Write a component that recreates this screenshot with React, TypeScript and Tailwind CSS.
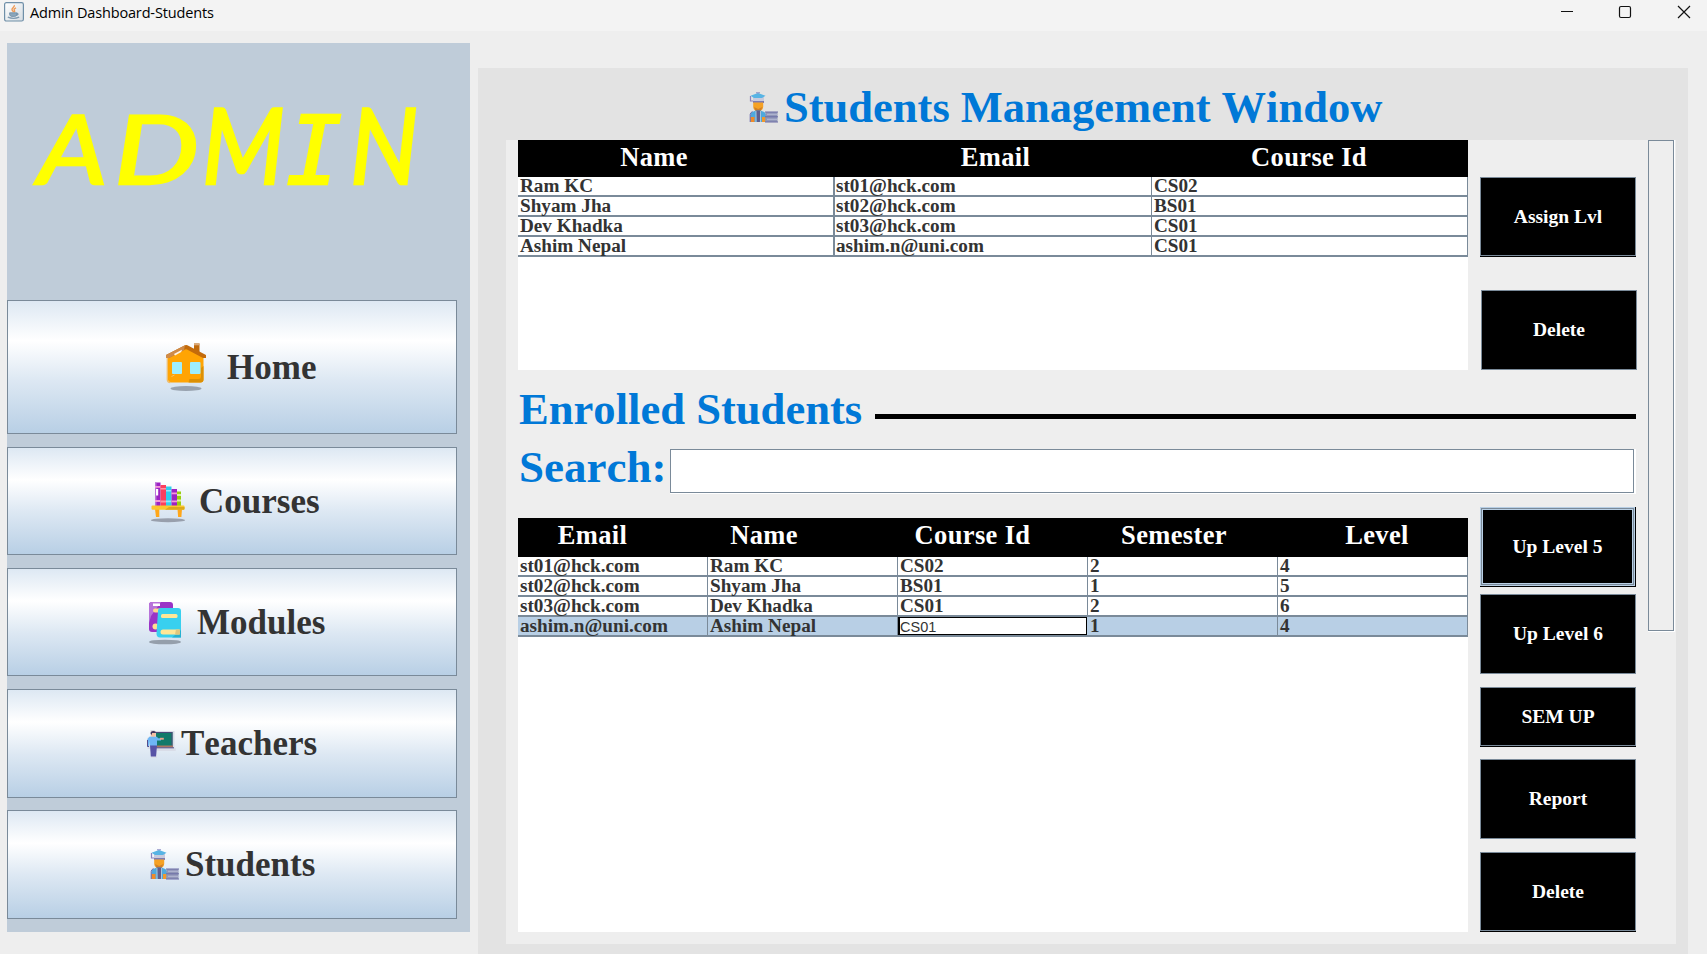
import type { ReactNode } from "react";

const serif = "font-['Liberation_Serif',serif] font-bold [font-kerning:none]";

function JavaIcon() {
  return (
    <svg width="20" height="20" viewBox="0 0 20 20" className="shrink-0">
      <defs>
        <linearGradient id="jv" x1="0" y1="0" x2="1" y2="1">
          <stop offset="0" stopColor="#ffffff" />
          <stop offset="1" stopColor="#d5dce2" />
        </linearGradient>
      </defs>
      <rect x="0.6" y="0.6" width="18.8" height="18.4" rx="1.8" fill="url(#jv)" stroke="#6f8fa8" strokeWidth="1.2" />
      <path d="M10.2 3.2c1 1.6-2.6 2.6-2.2 4.4.2 1 1.2 1.4 1.4 2.6M12 5.8c-1.6.8-2.4 1.6-1.6 2.6.5.6.4 1.2-.2 1.8" fill="none" stroke="#ef9a56" strokeWidth="1.4" />
      <path d="M5.6 10.8h7.2v1.4c0 1.4-1 2.2-2.2 2.2H8c-1.4 0-2.4-.9-2.4-2.2zM12.8 11.4c1.8-.6 2.2 1.6-.4 2" fill="#8ba6bb" stroke="#6b8aa4" strokeWidth="0.8" />
      <path d="M3.8 15.2c3 1.2 8.400 1.200 11.400 0" fill="none" stroke="#7f9ab0" strokeWidth="1.3" />
    </svg>
  );
}

function HomeIcon() {
  return (
    <svg width="42" height="50" viewBox="0 0 42 50">
      <ellipse cx="21" cy="46.500" rx="15.500" ry="2.500" fill="#98a2af" />
      <path d="M29 10V1.500h5.500V14z" fill="#c06a0c" />
      <path d="M29 1.300h5.500v2H29z" fill="#d9a878" />
      <path d="M3 14 21 4l17.500 10v23.500q0 3-3 3h-29.500q-3 0-3-3z" fill="#ffa404" />
      <path d="M38.500 24v13.500q0 3-3 3H23.500l1-3.500h9q2.500 0 2.500-2.500V26z" fill="#dc9005" />
      <path d="M2.300 15v22.500q0 3 3 3" fill="none" stroke="#f0bd6a" strokeWidth="1.300" />
      <path d="M1 13 20 3.200q1.200-.6 2.400 0L41 13v3h-3L22 7.500q-1-.5-2 0L4 16H1z" fill="#c36b0b" />
      <path d="M1 13 20 3.200l-1 5L4 16H1z" fill="#cf8b48" />
      <path d="m9 12 8-4.300-.8 2.300L10 13.500z" fill="#fff6e8" />
      <rect x="7" y="20" width="10" height="12" rx="1" fill="#9deeff" />
      <rect x="25" y="20" width="10.500" height="12" rx="1" fill="#9deeff" />
      <path d="M6.500 34.500l3-1.500" stroke="#f6c268" strokeWidth="1" />
    </svg>
  );
}

function CoursesIcon() {
  return (
    <svg width="36" height="41" viewBox="0 0 36 41">
      <ellipse cx="18" cy="38.200" rx="17" ry="2" fill="#989fac" />
      <rect x="5" y="0.500" width="5.500" height="23.500" fill="#9c22c4" />
      <rect x="5" y="0.500" width="1.500" height="23.500" fill="#bb74d8" />
      <rect x="5" y="4" width="5.500" height="1.800" fill="#f39ad8" />
      <rect x="6" y="7" width="2.200" height="6.500" fill="#fff" />
      <rect x="5" y="18" width="5.500" height="2" fill="#f39ad8" />
      <rect x="10.500" y="3" width="5.500" height="21" fill="#fb3f5e" />
      <rect x="10.500" y="6" width="5.500" height="1.500" fill="#ff93a4" />
      <rect x="10.500" y="18.500" width="5.500" height="2" fill="#ff93a4" />
      <rect x="16" y="4.500" width="5.500" height="19.500" fill="#30cdee" />
      <rect x="16" y="8" width="5.500" height="1.500" fill="#98e8f8" />
      <rect x="16" y="18.500" width="5.500" height="1.800" fill="#98e8f8" />
      <rect x="21.500" y="7" width="5.500" height="17" fill="#9c22c4" />
      <rect x="21.500" y="10.500" width="5.500" height="1.800" fill="#f39ad8" />
      <rect x="21.500" y="18.500" width="5.500" height="1.800" fill="#f39ad8" />
      <rect x="27" y="9.500" width="4" height="14.500" fill="#98cf10" />
      <rect x="27" y="12" width="4" height="2" fill="#dff0a8" />
      <rect x="27" y="17.500" width="4" height="2" fill="#dff0a8" />
      <path d="M5 27h4.300v8H6zM27.500 27H32l-.6 8h-3.300z" fill="#ffa71a" />
      <rect x="1.500" y="23.500" width="33" height="4.200" rx="1" fill="#fcc62f" />
      <path d="M19 25h15.500v1.700q0 1-1 1H15z" fill="#dda91c" />
    </svg>
  );
}

function ModulesIcon() {
  return (
    <svg width="34" height="44" viewBox="0 0 34 44">
      <ellipse cx="17" cy="41" rx="16" ry="2.300" fill="#959fab" />
      <path d="M4 1h18q3 0 3 3v24H4q-3 0-3-3V4q0-3 3-3z" fill="#9a34c6" />
      <path d="M4 1h9L3 15l-2 7V4q0-3 3-3z" fill="#b873da" />
      <rect x="5" y="2.500" width="7" height="2.500" fill="#fff" />
      <rect x="5" y="7.500" width="10" height="4" rx="2" fill="#ffd98a" />
      <path d="M1 24h9v7H4q-3 0-3-3z" fill="#9a34c6" />
      <circle cx="7.500" cy="25.500" r="3" fill="#ffdf91" />
      <path d="M13 7h17q3 0 3 3v26.500H12q-3.500 0-3.500-4L10 10q0-3 3-3z" fill="#38d0ef" />
      <path d="M24 36.500 33 29v7.500z" fill="#27b0d0" />
      <rect x="13" y="13" width="16.500" height="4" rx="1.500" fill="#ffe797" />
      <path d="M15 28.500h16.500v5H15q-2.500 0-2.500-2.500t2.500-2.500z" fill="#ffe797" />
      <path d="M28 28.500h4v5h-5z" fill="#e0c77e" />
    </svg>
  );
}

function TeachersIcon() {
  return (
    <svg width="29" height="30" viewBox="0 0 29 30">
      <path d="M8 2h19.500v17h1.200v3H10v7H4V20H.5V9l3-2V1h4z" fill="#d9dde8" />
      <rect x="9" y="3" width="16.500" height="15" fill="#127a6a" />
      <path d="M9 3h16.500v15h-1V4H9z" fill="#4b4a78" />
      <rect x="9" y="16.500" width="17" height="2" fill="#a97662" />
      <rect x="9" y="18.300" width="18" height="1" fill="#504c84" />
      <rect x="3.800" y="2" width="5" height="6" rx="2" fill="#f5bfa2" />
      <path d="M3.500 4.500q0-2.500 2.800-2.500T9 4L5 4v2z" fill="#3e3560" />
      <path d="M2.500 7.800h7.500l1 1.500h3v2.200h-4V17H3v-5l-1 5.500H.5V10z" fill="#6eb6f5" />
      <path d="M13 8.800h3.800v1.900H13z" fill="#eba489" />
      <path d="M3 16.500h7L9 27.500H3.800z" fill="#5753a6" />
      <path d="M.5 11v6.500h1.500" fill="none" stroke="#534d8c" strokeWidth="1" />
    </svg>
  );
}

function StudentsIcon() {
  return (
    <svg width="29" height="31" viewBox="0 0 29 31" className="shrink-0">
      <path d="M1.500 4v5h3" fill="none" stroke="#8b84bd" strokeWidth="1.200" />
      <path d="M4 4.500h11v6H4z" fill="#c8cadd" />
      <path d="M4 9.300h11v1.400H4z" fill="#5e599d" />
      <path d="M1.500 3.800 9 1l7.500 2.800L13 6H5z" fill="#58b4e4" />
      <path d="M7 .800h4" stroke="#7d80bf" strokeWidth="0.900" />
      <path d="M4.200 10.500h10v4q0 3-3 4.500H7.200q-3-1.500-3-4.500z" fill="#f5a124" />
      <path d="M5 15l4.200 2L13.500 15l-2 4h-5z" fill="#cf7f28" />
      <path d="M1.500 30v-7q0-2.500 3-3.500l2.500-1h4.500l2.500 1q3 1 3 3.500v7z" fill="#4fa8dc" />
      <path d="M7 18.500h4.500L10.800 30H7.700z" fill="#5f5f8d" />
      <path d="M7 19v11M11.500 19v11" stroke="#c9d9ea" strokeWidth="0.700" />
      <rect x="1.500" y="25" width="4" height="5" fill="#f08a28" />
      <rect x="13" y="25" width="3.500" height="5" fill="#f0982c" />
      <path d="M1.200 30V22.500q.2-2 2.300-3" fill="none" stroke="#5d5ca6" strokeWidth="0.900" />
      <rect x="16.500" y="20" width="12" height="10" fill="#9197b8" />
      <path d="M16 20h13M16 24.800h13M16 30h13" stroke="#6c6da6" strokeWidth="1" />
      <path d="M18 22.300h10M18 27.300h10" stroke="#b6bad4" strokeWidth="1" />
    </svg>
  );
}

function NavButton({ icon, label, size }: { icon: ReactNode; label: string; size: string }) {
  return (
    <button
      className={`flex w-[450px] shrink-0 items-center border border-[#7a8a99] bg-[linear-gradient(to_bottom,#dde8f3_0%,#ffffff_30%,#dde8f3_60%,#b8cfe5_100%)] text-[35px] leading-none text-[#333333] ${serif} ${size}`}
    >
      {icon}
      <span>{label}</span>
    </button>
  );
}

function ActionButton({ label, className = "", lip = false }: { label: string; className?: string; lip?: boolean }) {
  return (
    <button
      className={`flex w-[156px] shrink-0 flex-col bg-black text-[19.500px] leading-none text-white ${serif} ${lip ? "pb-px" : ""} ${className}`}
    >
      <span className="flex w-full flex-1 items-center justify-center border border-[#7a8a99]">{label}</span>
    </button>
  );
}

const requests = [
  ["Ram KC", "st01@hck.com", "CS02"],
  ["Shyam Jha", "st02@hck.com", "BS01"],
  ["Dev Khadka", "st03@hck.com", "CS01"],
  ["Ashim Nepal", "ashim.n@uni.com", "CS01"],
];

const enrolled = [
  ["st01@hck.com", "Ram KC", "CS02", "2", "4"],
  ["st02@hck.com", "Shyam Jha", "BS01", "1", "5"],
  ["st03@hck.com", "Dev Khadka", "CS01", "2", "6"],
  ["ashim.n@uni.com", "Ashim Nepal", "CS01", "1", "4"],
];

const row = `grid h-5 border-b-2 border-[#7a8a99] text-[19.2px] leading-[18px] text-[#333333] ${serif}`;
const head = `flex overflow-hidden bg-black text-center text-[26.500px] tracking-[0.35px] text-white ${serif}`;

export default function App() {
  return (
    <div className="flex h-[954px] w-[1707px] flex-col overflow-hidden bg-[#eeeeee]">
      <header className="flex h-[31px] shrink-0 items-start bg-[#f3f3f3] pl-1 pt-[2px]">
        <JavaIcon />
        <span className="ml-[6px] font-['Open_Sans',sans-serif] text-[14.500px] leading-[21px] tracking-[-0.15px] text-black">
          Admin Dashboard-Students
        </span>
        <div className="ml-auto mr-[16px] mt-[3px] flex gap-[45px]">
          <svg width="14" height="14" viewBox="0 0 14 14" fill="none" stroke="#111">
            <path d="M2 6.500h12" />
          </svg>
          <svg width="14" height="14" viewBox="0 0 14 14" fill="none" stroke="#111" strokeWidth="1.200">
            <rect x="1.500" y="1.500" width="11" height="11" rx="1.500" />
          </svg>
          <svg width="14" height="14" viewBox="0 0 14 14" fill="none" stroke="#111" strokeWidth="1.200">
            <path d="M1 1l12 12M13 1 1 13" />
          </svg>
        </div>
      </header>

      <div className="flex flex-1">
        <aside className="ml-[7px] mt-[12px] flex h-[889px] w-[463px] shrink-0 flex-col bg-[#bfccd9]">
          <h1 className="flex h-[257px] shrink-0 items-baseline whitespace-nowrap pl-[31px] pt-[45px] font-['Lato',sans-serif] text-[96px] italic leading-[118px] text-[#ffff00] [-webkit-text-stroke:2.5px_#ffff00]">
            <span className="w-[76px] origin-[0%_80%] scale-x-[1.14]">A</span>
            <span className="w-[88px] origin-[0%_80%] scale-x-[1.25]">D</span>
            <span className="w-[84px] origin-[0%_80%] scale-y-[1.09]">M</span>
            <span className="w-[64px] font-['DejaVu_Sans_Mono',monospace] text-[94px]">I</span>
            <span className="w-[70px] origin-[0%_80%] scale-y-[1.09]">N</span>
          </h1>
          <nav className="flex flex-col">
            <NavButton size="h-[134px] gap-[20px] pl-[157px]" icon={<HomeIcon />} label="Home" />
            <NavButton size="mt-[13px] h-[108px] gap-[13px] pl-[142px] [&>svg]:mt-[3px]" icon={<CoursesIcon />} label="Courses" />
            <NavButton size="mt-[13px] h-[108px] gap-[15px] pl-[140px] [&>svg]:mt-[2px]" icon={<ModulesIcon />} label="Modules" />
            <NavButton size="mt-[13px] h-[109px] gap-[5px] pl-[139px]" icon={<TeachersIcon />} label="Teachers" />
            <NavButton size="mt-[12px] h-[109px] gap-[6px] pl-[142px]" icon={<StudentsIcon />} label="Students" />
          </nav>
        </aside>

        <main className="ml-2 mt-[37px] flex h-[886px] w-[1210px] shrink-0 flex-col bg-[#e3e3e3]">
          <div className="flex h-[72px] shrink-0 items-start pl-[271px] pt-[16px]">
            <div className="mt-[8px]">
              <StudentsIcon />
            </div>
            <h2 className={`ml-[6px] text-[44.500px] leading-[46px] text-[#0078d7] ${serif}`}>Students Management Window</h2>
          </div>

          <section className="ml-[28px] flex h-[804px] w-[1170px] bg-[#eeeeee] pl-[12px]">
            <div className="flex w-[1118px] shrink-0 flex-col">
              <div className="flex h-[230px] shrink-0 gap-[12px]">
                <div className="w-[950px] shrink-0 bg-white">
                  <div className={`${head} h-[37px] leading-[35px]`}>
                    <span className="w-[272px] shrink-0">Name</span>
                    <span className="w-[411px] shrink-0">Email</span>
                    <span className="w-[216px] shrink-0">Course Id</span>
                  </div>
                  {requests.map((r) => (
                    <div key={r[1]} className={`${row} grid-cols-[317px_317px_316px]`}>
                      <span className="border-r-2 border-[#7a8a99] pl-[2px]">{r[0]}</span>
                      <span className="border-r border-[#7a8a99] pl-[1px]">{r[1]}</span>
                      <span className="border-r border-[#7a8a99] pl-[2px]">{r[2]}</span>
                    </div>
                  ))}
                </div>
                <div className="flex flex-col">
                  <ActionButton label="Assign Lvl" className="mt-[37px] h-[80px]" lip />
                  <ActionButton label="Delete" className="ml-px mt-[33px] h-[80px]" />
                </div>
              </div>

              <div className="flex h-[79px] shrink-0 items-center">
                <h3 className={`w-[357px] whitespace-nowrap pl-[1px] text-[44.600px] leading-none text-[#0078d7] ${serif}`}>Enrolled Students</h3>
                <div className="mt-[14px] h-[5px] flex-1 bg-black" />
              </div>

              <div className="flex h-[46px] shrink-0">
                <label className={`w-[152px] pl-px text-[45px] leading-[36px] text-[#0078d7] ${serif}`}>Search:</label>
                <div className="h-[45px] flex-1 border-b border-r-2 border-white">
                  <input className="block h-[44px] w-full border border-[#7a8a99] bg-white outline-none" />
                </div>
              </div>

              <div className="mt-[12px] flex shrink-0 gap-[12px]">
                <div className="mt-[11px] h-[414px] w-[950px] shrink-0 bg-white">
                  <div className={`${head} h-[39px] leading-[34px]`}>
                    <span className="w-[149px] shrink-0">Email</span>
                    <span className="w-[194px] shrink-0">Name</span>
                    <span className="w-[223px] shrink-0">Course Id</span>
                    <span className="w-[180px] shrink-0">Semester</span>
                    <span className="w-[226px] shrink-0">Level</span>
                  </div>
                  {enrolled.map((r, i) => (
                    <div key={r[0]} className={`${row} grid-cols-5 ${i === 3 ? "bg-[#b8cfe5]" : ""}`}>
                      {r.map((cell, c) =>
                        i === 3 && c === 2 ? (
                          <span
                            key={c}
                            className="mr-px h-[18px] overflow-hidden border border-l-2 border-black bg-white font-['Liberation_Sans',sans-serif] text-[14.500px] font-normal leading-[19px]"
                          >
                            {cell}
                          </span>
                        ) : (
                          <span key={c} className="border-r border-[#7a8a99] pl-[2px]">
                            {cell}
                          </span>
                        ),
                      )}
                    </div>
                  ))}
                </div>
                <div className="flex flex-col">
                  <button className={`h-[80px] w-[156px] bg-black pb-px pr-px text-[19.500px] leading-none text-white ${serif}`}>
                    <span className="block h-full border border-[#b8cfe5]">
                      <span className="block h-full border border-[#7a8a99]">
                        <span className="flex h-full items-center justify-center border border-[#b8cfe5]">Up Level 5</span>
                      </span>
                    </span>
                  </button>
                  <ActionButton label="Up Level 6" className="mt-[7px] h-[80px]" />
                  <ActionButton label="SEM UP" className="mt-[13px] h-[60px]" lip />
                  <ActionButton label="Report" className="mt-[12px] h-[80px]" />
                  <ActionButton label="Delete" className="mt-[13px] h-[80px]" lip />
                </div>
              </div>
            </div>

            <div className="ml-[12px] h-[492px] w-[27px] border-b border-r border-white">
              <div className="h-[491px] w-[26px] border border-[#7a8a99]" />
            </div>
          </section>
        </main>
      </div>
    </div>
  );
}
